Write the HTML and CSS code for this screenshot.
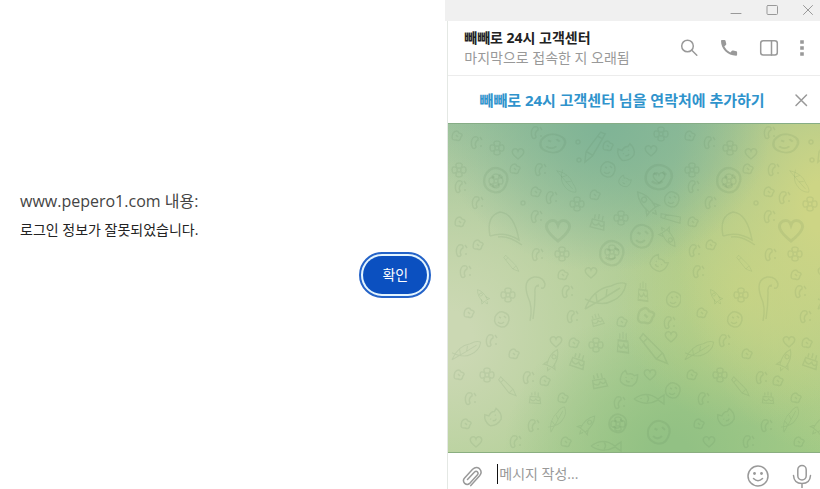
FILE: index.html
```html
<!DOCTYPE html>
<html lang="ko">

<head>
    <meta charset="UTF-8">
    <meta name="viewport" content="width=device-width, initial-scale=1.0">
    <title>고객센터</title>
    <link rel="stylesheet" href="styles.css">
</head>

<body>
    <div class="page">
        <section class="alert">
            <h1 class="alert-title">www.pepero1.com 내용:</h1>
            <p class="alert-text">로그인 정보가 잘못되었습니다.</p>
            <button type="button" class="alert-button">확인</button>
        </section>

        <main class="chat">
            <div class="titlebar">
                <button type="button" class="icon-button" aria-label="최소화">
                    <svg width="12" height="12" viewBox="0 0 12 12"><path d="M1 9.5h10"/></svg>
                </button>
                <button type="button" class="icon-button" aria-label="최대화">
                    <svg width="12" height="12" viewBox="0 0 12 12"><rect x="1" y="1.500" width="10.500" height="9" rx="1"/></svg>
                </button>
                <button type="button" class="icon-button" aria-label="닫기">
                    <svg width="12" height="12" viewBox="0 0 12 12"><path d="M1.500 1.500l9 9M10.500 1.500l-9 9"/></svg>
                </button>
            </div>

            <header class="chat-header">
                <div class="chat-info">
                    <h2 class="chat-name">빼빼로 24시 고객센터</h2>
                    <p class="chat-status">마지막으로 접속한 지 오래됨</p>
                </div>
                <div class="chat-tools">
                    <button type="button" class="icon-button" aria-label="검색">
                        <svg width="20" height="20" viewBox="0 0 20 20"><circle cx="8.500" cy="8" r="5.800"/><path d="M12.800 12.300l5 5"/></svg>
                    </button>
                    <button type="button" class="icon-button" aria-label="전화">
                        <svg width="20" height="20" viewBox="0 0 20 20"><path class="solid" d="M2 2.800Q2 2 2.900 2H5.500q.8 0 1 .8l.8 3.200q.1.700-.4 1.100L5.300 8.500q2 4 6 6l1.600-1.700q.5-.5 1.200-.3l3.200.8q.8.200.8 1v2.400q0 1-1 1C8.500 17.700 2 11 2 2.800z"/></svg>
                    </button>
                    <button type="button" class="icon-button" aria-label="사이드바">
                        <svg width="20" height="20" viewBox="0 0 20 20"><rect x="1.700" y="2.700" width="16.600" height="14.300" rx="2.500"/><path d="M12.500 3v14"/></svg>
                    </button>
                    <button type="button" class="icon-button" aria-label="메뉴">
                        <svg width="6" height="20" viewBox="0 0 6 20"><path class="solid" d="M1.200 2.200h3.600v3.600H1.200zM1.200 8.200h3.600v3.600H1.200zM1.200 14.200h3.600v3.600H1.200z"/></svg>
                    </button>
                </div>
            </header>

            <div class="contact-bar">
                <a href="#" class="contact-link">빼빼로 24시 고객센터 님을 연락처에 추가하기</a>
                <button type="button" class="icon-button" aria-label="숨기기">
                    <svg width="14" height="14" viewBox="0 0 14 14"><path d="M2 2l10.500 10.500M12.500 2L2 12.500"/></svg>
                </button>
            </div>

            <div class="wallpaper">
                <svg class="doodles" width="100%" height="100%" aria-hidden="true">
                    <defs>
                        <g id="ball"><path d="M-7-3q3-6 8-5 7 2 6 8-2 8-8 7-8-2-6-10M-4 2q3 3 6 0M-3-3l2 1M2-4l2 2"/></g>
                        <g id="flower"><circle r="2"/><path d="M-2-2q-3-5 2-5t2 5q5-3 5 2t-5 2q3 5-2 5t-2-5q-5 3-5-2t5-2z"/></g>
                        <g id="leaf"><path d="M-20 14Q-12-6 6-9q10-5 15-2-2 12-14 17-10 6-27-2M-20 14Q-2 4 15-7M-8 7l-1-8M1 2l1-8"/></g>
                        <g id="rocket"><path d="M-4 10Q-7-4 0-13 7-4 4 10zM-4 4l-4 7 4-1M4 4l4 7-4-1M-2 12l2 4 2-4"/><circle cy="-3" r="2.500"/></g>
                        <g id="hat"><path d="M-15 7q-4-20 10-24 14 1 19 28-14-9-29-4M-7 8q10-2 24 8"/></g>
                        <g id="hook"><path d="M-5 22q3-14-2-24-6-17 6-20 9-1 11 7 0 5-4 4M-2 20Q0 7 0-5q-1-9 4-9M3-14v2"/></g>
                        <g id="pencil"><path d="M-12-9l3-4L9 5l4 9-10-4zM-9-5l4-4M3 10l5-5"/></g>
                        <g id="cat"><path d="M-7 6q-3-7 1-12l3 3q4-3 7-1l3-2q3 7-1 12-7 4-13 0M-3 0v1M3-1v1M-2 3q2 2 4 0"/></g>
                        <g id="cake"><path d="M-7 6l1-8 12 1 1 8zM-6 1q4 5 7 0 3 5 6 0M-4-3v-4M0-3v-5M4-2v-5"/></g>
                        <g id="star"><path d="M-4-3q4-4 6 0 5 1 2 4-1 5-5 3-6 1-3-7M-1-1l2 2"/></g>
                        <g id="note"><path d="M-4 5q-2-7 2-10 5-1 4 3-4 2-2 7-2 3-4 0M4-5l2 3M5 3v2"/></g>
                        <g id="fish"><path d="M-15 0q12-9 24 0l6-4v9L9 1Q-3 8-15 0M-8-1v1M-2-4q3 4 0 7"/></g>
                        <g id="heart"><path d="M0 5q-9-7-4-10 3-1 4 2 1-3 4-2 5 3-4 10z"/></g>
                        <g id="dot"><circle r="2"/></g>
                        <pattern id="tile" width="233" height="330" patternUnits="userSpaceOnUse">
                            <use href="#note" x="28" y="18"/><use href="#flower" x="49" y="24"/>
                            <use href="#heart" x="70" y="30"/><use href="#flower" x="11" y="46"/>
                            <use href="#ball" transform="translate(105 20) scale(1.700 1.200)"/>
                            <use href="#dot" x="130" y="18"/><use href="#dot" x="131" y="36"/>
                            <use href="#pencil" transform="translate(147 22) rotate(75)"/>
                            <use href="#cat" transform="translate(178 28) rotate(-25)"/><use href="#flower" x="213" y="10"/>
                            <use href="#heart" x="203" y="27"/><use href="#star" x="160" y="22"/>
                            <use href="#star" x="9" y="12"/><use href="#note" x="88" y="8"/>
                            <use href="#ball" transform="translate(48 57) scale(1.600)"/><use href="#flower" x="48" y="57"/>
                            <use href="#note" x="92" y="45"/><use href="#ball" x="160" y="46"/>
                            <use href="#star" x="67" y="45"/><use href="#note" x="12" y="62"/>
                            <use href="#leaf" transform="translate(119 57) scale(.6) rotate(80)"/>
                            <use href="#cat" transform="translate(177 57) scale(.7) rotate(30)"/>
                            <use href="#ball" transform="translate(211 54) scale(1.800 1.600)"/><use href="#heart" x="211" y="54"/>
                            <use href="#star" x="88" y="68"/><use href="#dot" x="75" y="79"/>
                            <use href="#note" x="29" y="78"/><use href="#note" x="103" y="73"/>
                            <use href="#flower" x="129" y="80"/><use href="#star" x="147" y="71"/>
                            <use href="#rocket" transform="translate(198 78) rotate(-40)"/>
                            <use href="#ball" x="224" y="76"/><use href="#star" x="12" y="98"/>
                            <use href="#hat" x="57" y="105"/><use href="#note" x="88" y="92"/>
                            <use href="#cake" transform="translate(150 98) rotate(10)"/><use href="#flower" x="173" y="94"/>
                            <use href="#pencil" transform="translate(225 94) rotate(-35) scale(.8)"/>
                            <use href="#heart" transform="translate(110 107) scale(2)"/>
                            <use href="#ball" transform="translate(194 113) scale(1.500)"/>
                            <use href="#rocket" transform="translate(221 114) rotate(145) scale(.8)"/>
                            <use href="#star" x="30" y="121"/><use href="#note" x="89" y="130"/>
                            <use href="#flower" x="114" y="130"/><use href="#note" x="13" y="126"/>
                            <use href="#ball" transform="translate(164 130) scale(1.600)"/><use href="#flower" x="164" y="128"/>
                            <use href="#pencil" transform="translate(63 139) scale(.6)"/>
                            <use href="#heart" x="143" y="149"/><use href="#cat" transform="translate(211 139) rotate(40)"/>
                            <use href="#note" x="17" y="147"/><use href="#star" x="115" y="151"/>
                            <use href="#hook" x="87" y="175"/><use href="#leaf" x="157" y="171"/>
                            <use href="#rocket" transform="translate(34 172) rotate(-35) scale(.6)"/>
                            <use href="#flower" x="60" y="171"/><use href="#note" x="119" y="167"/>
                            <use href="#cake" transform="translate(195 168) scale(.7 1.300)"/>
                            <use href="#ball" x="226" y="176"/><use href="#star" x="21" y="189"/>
                            <use href="#ball" x="54" y="196"/><use href="#note" x="124" y="192"/>
                            <use href="#cake" transform="translate(149 196) scale(.8) rotate(-20)"/>
                            <use href="#star" transform="translate(198 192) scale(1.600)"/>
                            <use href="#star" x="174" y="198"/><use href="#note" x="221" y="198"/>
                            <use href="#note" x="43" y="216"/><use href="#heart" x="108" y="218"/>
                            <use href="#leaf" transform="translate(18 226) scale(.7)"/>
                            <use href="#star" x="126" y="219"/><use href="#flower" x="148" y="221"/>
                            <use href="#cake" transform="translate(175 219) scale(.8 1.400)"/>
                            <use href="#pencil" transform="translate(205 224) scale(1.100)"/>
                            <use href="#heart" x="223" y="213"/><use href="#star" x="66" y="230"/>
                            <use href="#rocket" transform="translate(105 235) rotate(25) scale(.8)"/>
                            <use href="#cake" transform="translate(130 237) rotate(15)"/><use href="#note" x="80" y="253"/>
                            <use href="#star" x="97" y="257"/><use href="#star" x="11" y="251"/>
                            <use href="#flower" x="39" y="251"/><use href="#cake" transform="translate(151 257) rotate(-15)"/>
                            <use href="#cat" transform="translate(181 254) rotate(20)"/><use href="#heart" x="202" y="251"/>
                            <use href="#pencil" transform="translate(59 262) scale(.7)"/>
                            <use href="#star" x="115" y="274"/><use href="#note" x="171" y="278"/>
                            <use href="#fish" x="201" y="275"/><use href="#ball" x="225" y="267"/>
                            <use href="#cake" transform="translate(87 274) scale(.8)"/>
                            <use href="#note" x="22" y="274"/><use href="#cat" transform="translate(45 293) rotate(-30)"/>
                            <use href="#note" x="85" y="301"/><use href="#leaf" transform="translate(109 295) scale(.6) rotate(-30)"/>
                            <use href="#rocket" transform="translate(140 300) rotate(40) scale(.8)"/>
                            <use href="#ball" transform="translate(170 300) scale(1.200)"/>
                            <use href="#flower" x="170" y="300"/>
                            <use href="#ball" transform="translate(211 309) scale(1.500)"/>
                            <use href="#star" x="18" y="300"/><use href="#heart" x="28" y="318"/>
                            <use href="#note" x="67" y="317"/><use href="#fish" x="158" y="322"/>
                            <use href="#star" x="118" y="318"/>
                        </pattern>
                    </defs>
                    <rect width="100%" height="100%" fill="url(#tile)" stroke="none"/>
                </svg>
            </div>

            <form class="composer">
                <button type="button" class="icon-button" aria-label="파일 첨부">
                    <svg width="22" height="24" viewBox="0 0 22 24"><path d="M6.500 15.500l6.800-7.300q1.700-1.600 3.200-.3 1.300 1.500-.2 3.200l-7.300 8q-2.700 2.500-5.300.3-2.500-2.700-.1-5.500l8-8.700q3.500-3.300 6.900-.5 3.200 3.400.1 7.100l-8.800 9.800"/></svg>
                </button>
                <input type="text" class="message-input" aria-label="메시지" placeholder="메시지 작성...">
                <button type="button" class="icon-button" aria-label="이모티콘">
                    <svg width="24" height="24" viewBox="0 0 24 24"><circle cx="12" cy="12" r="10"/><path d="M7.500 14.500q4.500 4.500 9 0"/><circle class="solid" cx="8.500" cy="9.500" r="1.400"/><circle class="solid" cx="15.500" cy="9.500" r="1.400"/></svg>
                </button>
                <button type="button" class="icon-button" aria-label="음성 메시지">
                    <svg width="20" height="24" viewBox="0 0 20 24"><rect x="5.800" y="1.500" width="8.400" height="14.500" rx="4.200"/><path d="M1.500 11.500q.5 8 8.500 8t8.500-8M10 19.500V24"/></svg>
                </button>
            </form>
        </main>
    </div>
</body>

</html>
```

FILE: styles.css
```css
* {
    box-sizing: border-box;
}

body {
    margin: 0;
    background-color: #fff;
    font-family: "Open Sans", "Noto Sans CJK KR", sans-serif;
    font-size: 14px;
    line-height: 20px;
}

h1,
h2,
p {
    margin: 0;
}

.page {
    display: grid;
    grid-template-columns: 6fr 5fr;
    height: 100vh;
    overflow: hidden;
}

/* 알림창 */
.alert {
    display: flex;
    flex-direction: column;
    justify-content: center;
    gap: 8px;
    padding: 0 20px 6px;
}

.alert-title {
    color: #444;
    font-size: 16px;
    font-weight: 400;
    line-height: 22px;
}

.alert-text {
    color: #222;
}

.alert-button {
    align-self: flex-end;
    width: 64px;
    height: 38px;
    margin-top: 8px;
    padding: 0;
    border: none;
    border-radius: 20px;
    outline: 2px solid #2463c8;
    outline-offset: 2px;
    background-color: #0b50c0;
    box-shadow: 0 0 0 2px #e4f6ff;
    color: #fff;
    font: inherit;
    cursor: pointer;
}

/* 채팅창 */
.chat {
    display: flex;
    flex-direction: column;
    min-width: 0;
    border-left: 1px solid #e4e8e4;
}

.icon-button {
    display: flex;
    padding: 0;
    border: none;
    background: none;
    cursor: pointer;
}

.icon-button svg {
    fill: none;
    stroke: #999;
    stroke-width: 1.5;
    stroke-linecap: round;
    stroke-linejoin: round;
}

.icon-button .solid {
    fill: #999;
    stroke: none;
}

.titlebar {
    display: flex;
    justify-content: flex-end;
    align-items: center;
    gap: 24px;
    height: 21px;
    margin-left: -3px;
    padding: 0 6px 2px 0;
    background-color: #f0f0f0;
}

.titlebar svg {
    stroke-width: 1;
}

.chat-header {
    display: flex;
    justify-content: space-between;
    align-items: center;
    height: 55px;
    padding: 0 15px 0 16px;
    border-bottom: 1px solid #ececec;
}

.chat-name {
    color: #222;
    font-size: 14px;
    font-weight: 700;
    line-height: 20px;
}

.chat-status {
    color: #999;
}

.chat-tools {
    display: flex;
    gap: 20px;
    margin-right: 0;
}

.contact-bar {
    display: flex;
    align-items: center;
    height: 47px;
    padding: 0 12px 0 2px;
}

.contact-link {
    flex: 1;
    color: #2f93cc;
    font-size: 15px;
    font-weight: 700;
    text-align: center;
    text-decoration: none;
}

.wallpaper {
    flex: 1;
    min-height: 0;
    border-top: 1px solid #86ad86;
    border-bottom: 1px solid #8aae80;
    background:
        radial-gradient(ellipse 45% 45% at 42% 0%, #80b496 5%, transparent 100%),
        radial-gradient(ellipse 40% 75% at 100% 25%, #cdd585 10%, transparent 100%),
        radial-gradient(ellipse 35% 40% at 80% 52%, #bfd186 0%, transparent 100%),
        radial-gradient(ellipse 45% 45% at 60% 100%, #92c184 10%, transparent 100%),
        radial-gradient(ellipse 65% 80% at 0% 65%, #cbd8b3 10%, transparent 100%),
        linear-gradient(#93bd97, #abcb8e 45%, #a4cb86);
}

.doodles {
    display: block;
    fill: none;
    stroke: #426f42;
    stroke-width: 1.5;
    stroke-opacity: .1;
}

.composer {
    display: flex;
    align-items: flex-start;
    height: 36px;
    padding: 11px 8px 0 13px;
}

.message-input {
    flex: 1;
    min-width: 0;
    height: 20px;
    margin-left: 14px;
    padding: 0 1px;
    border: none;
    border-left: 1px solid #111;
    outline: none;
    font: inherit;
}

.message-input::placeholder {
    color: #999;
}

.composer .icon-button + .icon-button {
    margin-left: 22px;
}
```
